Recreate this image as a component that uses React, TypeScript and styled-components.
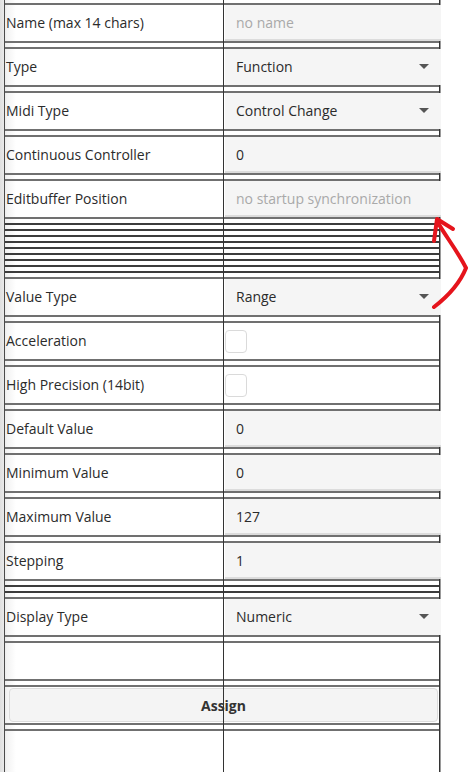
import React from "react";
import styled, { createGlobalStyle } from "styled-components";

const Global = createGlobalStyle`
  html, body { margin: 0; padding: 0; }
  body {
    background: linear-gradient(to right, #dedede 0px, #f3f3f3 7px, #ffffff 16px);
    font-family: "Open Sans", "Noto Sans", Arial, sans-serif;
    font-size: 14px;
    color: #2b2b2b;
    min-height: 772px;
  }
`;

const Page = styled.div`
  position: relative;
  margin-left: 4px;
  width: 436px;
  min-height: 772px;
  padding-top: 3px;
  box-sizing: border-box;
  border-left: 1px solid #4a4a4a;
  border-right: 1px solid #333;
  box-shadow: 1px 0 0 #9a9a9a;
  display: flex;
  flex-direction: column;
`;

const ColumnDivider = styled.div`
  position: absolute;
  top: 0;
  bottom: 0;
  left: 218px;
  width: 1px;
  background: #333;
  z-index: 2;
`;

const Row = styled.div<{ $open?: boolean }>`
  display: grid;
  grid-template-columns: 218px 1px 217px;
  border-top: 2px solid #707070;
  border-bottom: ${(p) => (p.$open ? "none" : "2px solid #707070")};
  margin-bottom: ${(p) => (p.$open ? "0" : "4px")};
  height: 36px;
  flex: ${(p) => (p.$open ? "1" : "none")};
`;

const HiddenRow = styled.div`
  height: 2px;
  background: #3c3c3c;
  margin-bottom: 4px;
`;

const Label = styled.div`
  grid-column: 1;
  display: flex;
  align-items: center;
  padding-left: 1px;
  padding-bottom: 1px;
  white-space: nowrap;
`;

const Cell = styled.div`
  grid-column: 3;
  display: flex;
  align-items: center;
  padding-left: 1px;
`;

const TextField = styled.div<{ $placeholder?: boolean }>`
  flex: 1;
  align-self: stretch;
  display: flex;
  align-items: center;
  padding-left: 11px;
  background: #f5f5f5;
  border-bottom: 2px solid #dcdcdc;
  color: ${(p) => (p.$placeholder ? "#a9a9a9" : "#2b2b2b")};
  white-space: nowrap;
`;

const Select = styled.div`
  flex: 1;
  align-self: stretch;
  display: flex;
  align-items: center;
  justify-content: space-between;
  padding: 0 12px 1px 11px;
  background: #f5f5f5;
  color: #2b2b2b;
`;

const Caret = styled.span`
  width: 0;
  height: 0;
  border-left: 5px solid transparent;
  border-right: 5px solid transparent;
  border-top: 5px solid #555;
`;

const Checkbox = styled.span`
  width: 20px;
  height: 21px;
  border: 1px solid #dadada;
  border-radius: 4px;
  background: #fff;
`;

const ButtonRow = styled.div`
  display: flex;
  border-top: 2px solid #707070;
  border-bottom: 2px solid #707070;
  margin-bottom: 4px;
  height: 36px;
  align-items: center;
  padding: 0 1px 0 4px;
`;

const Button = styled.button`
  flex: 1;
  height: 34px;
  background: #f4f4f4;
  border: 1px solid #dcdcdc;
  border-radius: 4px;
  font-family: inherit;
  font-size: 14px;
  font-weight: 700;
  color: #333;
  cursor: pointer;
`;

const Annotation = styled.svg`
  position: absolute;
  left: 0;
  top: 0;
  width: 468px;
  height: 772px;
  pointer-events: none;
  z-index: 5;
`;

type Field =
  | { kind: "text"; label: string; value: string; placeholder?: boolean }
  | { kind: "select"; label: string; value: string }
  | { kind: "check"; label: string }
  | { kind: "hidden"; count: number };

const fields: Field[] = [
  { kind: "text", label: "Name (max 14 chars)", value: "no name", placeholder: true },
  { kind: "select", label: "Type", value: "Function" },
  { kind: "select", label: "Midi Type", value: "Control Change" },
  { kind: "text", label: "Continuous Controller", value: "0" },
  { kind: "text", label: "Editbuffer Position", value: "no startup synchronization", placeholder: true },
  { kind: "hidden", count: 9 },
  { kind: "select", label: "Value Type", value: "Range" },
  { kind: "check", label: "Acceleration" },
  { kind: "check", label: "High Precision (14bit)" },
  { kind: "text", label: "Default Value", value: "0" },
  { kind: "text", label: "Minimum Value", value: "0" },
  { kind: "text", label: "Maximum Value", value: "127" },
  { kind: "text", label: "Stepping", value: "1" },
  { kind: "hidden", count: 2 },
  { kind: "select", label: "Display Type", value: "Numeric" },
];

function renderField(f: Field, i: number) {
  if (f.kind === "hidden") {
    return Array.from({ length: f.count }, (_, j) => <HiddenRow key={`${i}-${j}`} />);
  }
  let control: React.ReactNode = null;
  if (f.kind === "text") {
    control = <TextField $placeholder={f.placeholder}>{f.value}</TextField>;
  } else if (f.kind === "select") {
    control = (
      <Select>
        {f.value}
        <Caret />
      </Select>
    );
  } else {
    control = <Checkbox />;
  }
  return (
    <Row key={i}>
      <Label>{f.label}</Label>
      <Cell>{control}</Cell>
    </Row>
  );
}

export default function App() {
  return (
    <>
      <Global />
      <Page>
        <ColumnDivider />
        {fields.map(renderField)}
        <Row>
          <Label />
          <Cell />
        </Row>
        <ButtonRow>
          <Button>Assign</Button>
        </ButtonRow>
        <Row $open>
          <Label />
          <Cell />
        </Row>
      </Page>
      <Annotation viewBox="0 0 468 772">
        <g fill="none" stroke="#e5141c" strokeWidth="4" strokeLinecap="round" strokeLinejoin="round">
          <path d="M434 241 L437 219 L453 229" />
          <path d="M437 221 C 444 234, 457 250, 466 268 C 460 283, 447 297, 434 307" />
        </g>
      </Annotation>
    </>
  );
}
